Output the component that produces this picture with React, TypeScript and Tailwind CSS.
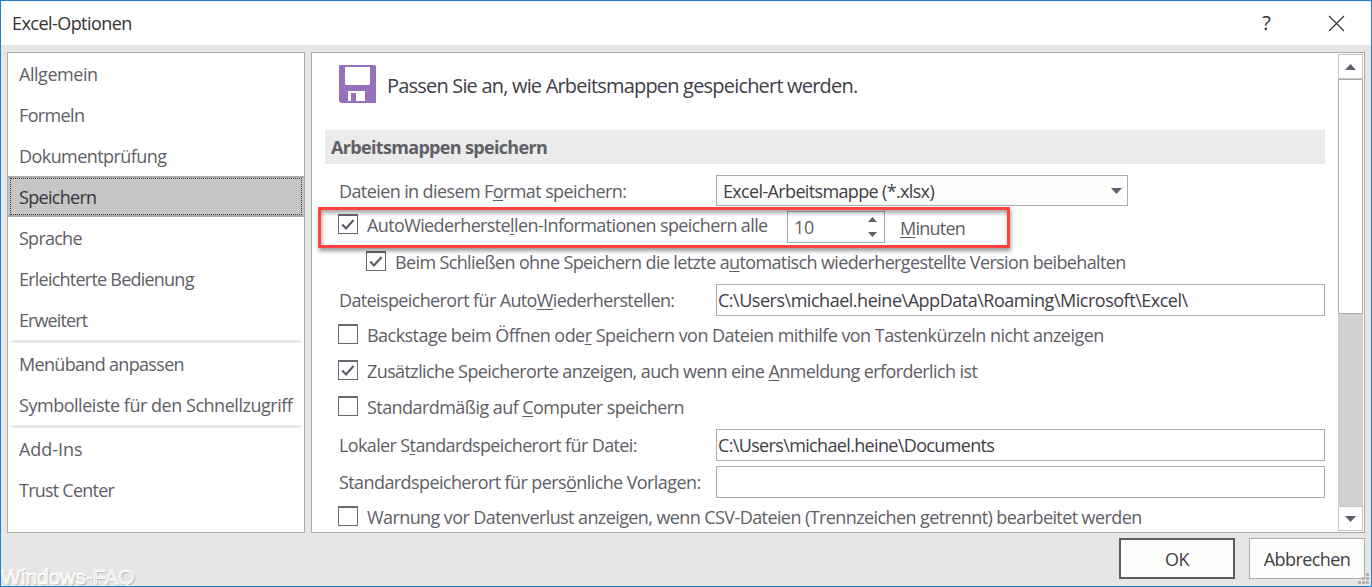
import type { ReactNode } from "react";

const U = ({ children }: { children: ReactNode }) => (
  <span className="underline decoration-1 underline-offset-2">{children}</span>
);

function Check({ checked = false }: { checked?: boolean }) {
  return (
    <span className="flex h-5 w-5 shrink-0 items-center justify-center border border-t-2 border-[#6a6672] bg-white">
      {checked && (
        <svg width="14" height="13" viewBox="0 0 14 13" fill="none" stroke="#5f5b68" strokeWidth="2.2">
          <path d="M1.2 6.5 L5 10.5 L12.6 2" />
        </svg>
      )}
    </span>
  );
}

const Up = ({ size = "w-[11px]" }: { size?: string }) => (
  <svg className={size} viewBox="0 0 11 6" fill="#605e6c"><path d="M0 6 L5.5 0 L11 6 Z" /></svg>
);
const Down = ({ size = "w-[11px]" }: { size?: string }) => (
  <svg className={size} viewBox="0 0 11 6" fill="#605e6c"><path d="M0 0 L11 0 L5.5 6 Z" /></svg>
);

function Item({ children, active = false, track }: { children: ReactNode; active?: boolean; track: string }) {
  if (active) {
    return (
      <div className="flex h-[41px] items-center border-y-2 border-[#ababab] bg-[#c6c6c6] px-0.5">
        <div className="flex h-[37px] w-full items-center border border-dotted border-[#333] pl-2 text-[#36343c]">
          <span className={track}>{children}</span>
        </div>
      </div>
    );
  }
  return (
    <div className="flex h-[41px] items-center pl-[11px] pt-px">
      <span className={track}>{children}</span>
    </div>
  );
}

const Separator = () => <div className="mx-[3px] h-[3px] bg-[#e8e8e8]" />;

function PathRow({ label, value, labelTrack, valueTrack, gap }: { label: ReactNode; value: string; labelTrack: string; valueTrack: string; gap: string }) {
  return (
    <div className={`flex h-8 items-center pl-[27px] ${gap}`}>
      <span className={`w-[377px] ${labelTrack}`}>{label}</span>
      <div className="flex h-8 w-[609px] items-center border border-[#ababab] pl-px text-[#403e46]">
        <span className={valueTrack}>{value}</span>
      </div>
    </div>
  );
}

function CheckRow({ checked, children, track, gap }: { checked?: boolean; children: ReactNode; track: string; gap: string }) {
  return (
    <div className={`flex h-5 items-center gap-[9px] pl-[26px] ${gap}`}>
      <Check checked={checked} />
      <span className={`pt-px ${track}`}>{children}</span>
    </div>
  );
}

export default function App() {
  return (
    <div className="relative flex h-[587px] w-[1372px] flex-col overflow-hidden whitespace-nowrap border border-[#1a7fd4] bg-[#e6e6e6] font-['Open_Sans','Noto_Sans',sans-serif] text-[18px] leading-6 text-[#605e66]">
      <header className="flex h-11 shrink-0 items-center bg-white pl-[11px] pr-[26px] text-[#333]">
        <span className="flex-1 tracking-[-0.55px]">Excel-Optionen</span>
        <span className="mr-[57px] text-[20px]">?</span>
        <svg width="17" height="17" viewBox="0 0 17 17" stroke="#333" strokeWidth="1.2"><path d="M1 1 L16 16 M16 1 L1 16" /></svg>
      </header>

      <div className="flex h-[488px] shrink-0 gap-1.5 px-1.5 pt-[7px]">
        <nav className="w-[298px] shrink-0 border border-[#ababab] bg-white">
          <Item track="tracking-[-0.45px]">Allgemein</Item>
          <Item track="tracking-[-0.65px]">Formeln</Item>
          <Item track="tracking-[-0.57px]">Dokumentprüfung</Item>
          <Item active track="tracking-[-0.7px]">Speichern</Item>
          <Item track="tracking-[-0.75px]">Sprache</Item>
          <Item track="tracking-[-0.77px]">Erleichterte Bedienung</Item>
          <Item track="tracking-[-0.9px]">Erweitert</Item>
          <Separator />
          <Item track="tracking-[-0.68px]">Menüband anpassen</Item>
          <Item track="tracking-[-0.47px]">Symbolleiste für den Schnellzugriff</Item>
          <Separator />
          <Item track="tracking-[-0.05px]">Add-Ins</Item>
          <Item track="tracking-[-0.77px]">Trust Center</Item>
        </nav>

        <main className="flex w-[1054px] shrink-0 border border-[#ababab] bg-white">
          <section className="flex w-[1026px] shrink-0 flex-col overflow-hidden pl-[13px]">
            <div className="mt-3 flex h-[38px] shrink-0 items-center gap-[11px] pl-[14px] text-[20px] text-[#403e46]">
              <svg width="37" height="38" viewBox="0 0 37 38">
                <path fill="#986fbb" d="M1 0 H36 L37 1 V38 H2 L0 36 V1 Z" />
                <path fill="#fff" d="M6 2 H31 V19 L30 20 H7 L6 19 Z M9 26 H26 V36 H17 V28 H12 V36 H9 Z" />
              </svg>
              <span className="pt-1 tracking-[-0.81px] [word-spacing:0px]">Passen Sie an, wie Arbeitsmappen gespeichert werden.</span>
            </div>
            <h2 className="mt-[27px] flex h-[34px] w-[1000px] shrink-0 items-center bg-[#ebebeb] pb-px pl-1.5 font-bold">
              <span className="tracking-[-0.67px]">Arbeitsmappen speichern</span>
            </h2>
            <div className="mt-[11px] flex h-[31px] items-center pl-[14px]">
              <span className="w-[377px] tracking-[-0.6px]">Dateien in diesem F<U>o</U>rmat speichern:</span>
              <div className="flex h-[31px] w-[412px] items-center justify-between border border-[#ababab] bg-[#fdfdfb] pl-1.5 pr-[5px] text-[#403e46]">
                <span className="tracking-[-0.65px]">Excel-Arbeitsmappe (*.xlsx)</span>
                <Down />
              </div>
            </div>
            <div className="-ml-[13px] flex flex-col">
              <div className="mt-[5px] flex h-8 items-center pl-[26px]">
                <div className="-mt-1.5 flex w-[449px] items-center gap-[9px]">
                  <Check checked />
                  <span className="pt-0.5 tracking-[-0.62px]">AutoWiederherste<U>l</U>len-Informationen speichern alle</span>
                </div>
                <div className="flex h-8 w-[98px] items-center justify-between border border-[#ababab] pl-1.5 pr-[7px]">
                  <span className="tracking-[-0.4px]">10</span>
                  <span className="flex flex-col gap-2.5"><Up size="w-[9px]" /><Down size="w-[9px]" /></span>
                </div>
                <span className="pl-[15px] pt-px tracking-[-0.75px]"><U>M</U>inuten</span>
              </div>
              <div className="mt-2 flex h-5 items-center gap-[9px] pl-[54px]">
                <Check checked />
                <span className="pt-px tracking-[-0.63px]">Beim Schließen ohne Speichern die letzte a<U>u</U>tomatisch wiederhergestellte Version beibehalten</span>
              </div>
              <PathRow gap="mt-[13px]" label={<>Dateispeicherort für Auto<U>W</U>iederherstellen:</>} labelTrack="tracking-[-0.63px]" value={"C:\\Users\\michael.heine\\AppData\\Roaming\\Microsoft\\Excel\\"} valueTrack="tracking-[-0.48px]" />
              <CheckRow gap="mt-2" track="tracking-[-0.54px]">Backstage beim Öffnen ode<U>r</U> Speichern von Dateien mithilfe von Tastenkürzeln nicht anzeigen</CheckRow>
              <CheckRow gap="mt-4" checked track="tracking-[-0.6px]">Zusätzliche Speicherorte anzeigen, auch wenn eine <U>A</U>nmeldung erforderlich ist</CheckRow>
              <CheckRow gap="mt-4" track="tracking-[-0.56px]">Standardmäßig auf <U>C</U>omputer speichern</CheckRow>
              <PathRow gap="mt-[13px]" label={<>Lokaler S<U>t</U>andardspeicherort für Datei:</>} labelTrack="tracking-[-0.63px]" value={"C:\\Users\\michael.heine\\Documents"} valueTrack="tracking-[-0.65px]" />
              <PathRow gap="mt-[5px]" label={<>Standardspeicherort für pers<U>ö</U>nliche Vorlagen:</>} labelTrack="tracking-[-0.59px]" value="" valueTrack="" />
              <CheckRow gap="mt-2" track="tracking-[-0.59px]">Warnung vor Datenverlust anzeigen, wenn CSV-Dateien (Trennzeichen getrennt) bearbeitet werden</CheckRow>
            </div>
          </section>
          <div className="mt-px flex h-[477px] w-[25px] flex-col bg-[#d1d1d1]">
            <div className="flex h-[25px] items-center justify-center border border-[#c6c6c6] bg-white"><Up /></div>
            <div className="h-[235px] border border-[#ababab] bg-white" />
            <div className="flex-1" />
            <div className="flex h-[25px] items-center justify-center border border-[#c6c6c6] bg-white"><Down /></div>
          </div>
        </main>
      </div>

      <footer className="flex justify-end gap-[14px] pr-1.5 pt-[5px] text-[#403e46]">
        <button className="h-[41px] w-[116px] border-2 border-[#5a5f5c] bg-[#fdfdfc] tracking-[-0.5px]">OK</button>
        <button className="h-[41px] w-[116px] border border-[#ababab] bg-[#fdfdfc] tracking-[-0.55px]">Abbrechen</button>
      </footer>

      <div className="absolute left-[317px] top-[206px] h-[41px] w-[692px] border-[3px] border-[#ff4340] shadow-[1px_3px_4px_rgba(0,0,0,0.4),inset_1px_3px_4px_rgba(0,0,0,0.35)]" />
      <svg className="absolute bottom-0.5 right-0.5" width="11" height="11" fill="#b5b5b5">
        <path d="M8 0h3v3h-3z M4 4h3v3h-3z M8 4h3v3h-3z M0 8h3v3h-3z M4 8h3v3h-3z M8 8h3v3h-3z" />
      </svg>
      <div className="absolute bottom-0 left-0 font-['Liberation_Sans',Arial,sans-serif] text-[21px] leading-[18px] tracking-[-0.05px] text-[#dcdcdc] [-webkit-text-stroke:1px_white] [text-shadow:1px_1px_1px_#999]">Windows-FAQ</div>
    </div>
  );
}
